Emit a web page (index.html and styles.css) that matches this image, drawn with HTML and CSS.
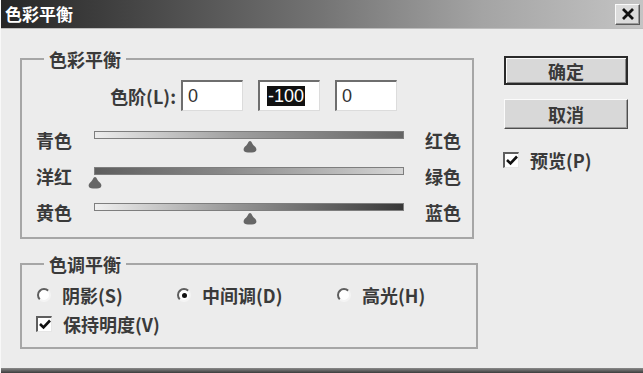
FILE: index.html
```html
<!DOCTYPE html>
<html lang="zh-CN">
<head>
<meta charset="utf-8">
<title>色彩平衡</title>
<link rel="stylesheet" href="styles.css">
</head>
<body>
<div class="window">
  <div class="titlebar">
    <span class="title">色彩平衡</span>
    <span class="close-btn">
      <svg width="14" height="12" viewBox="0 0 14 12"><path d="M2 1 L12 11 M12 1 L2 11" stroke="#111" stroke-width="2.8" fill="none"/></svg>
    </span>
  </div>
  <div class="main">
    <div class="left">
      <fieldset class="group group-color">
        <legend>色彩平衡</legend>
        <div class="levels">
          <span class="levels-label">色阶(L):</span>
          <span class="field">0</span>
          <span class="field"><span class="sel">-100</span></span>
          <span class="field">0</span>
        </div>
        <div class="slider-row">
          <span class="lbl">青色</span>
          <div class="slider">
            <div class="track track-cr"></div>
            <svg class="thumb" style="left:50%" width="14" height="12" viewBox="0 0 14 12"><path d="M7 0 C5.2 0 5 3 3 4.8 C1 6.3 0 8 1 10 C2.2 12 11.8 12 13 10 C14 8 13 6.3 11 4.8 C9 3 8.8 0 7 0Z"/></svg>
          </div>
          <span class="lbl-r">红色</span>
        </div>
        <div class="slider-row">
          <span class="lbl">洋红</span>
          <div class="slider">
            <div class="track track-mg"></div>
            <svg class="thumb" style="left:0%" width="14" height="12" viewBox="0 0 14 12"><path d="M7 0 C5.2 0 5 3 3 4.8 C1 6.3 0 8 1 10 C2.2 12 11.8 12 13 10 C14 8 13 6.3 11 4.8 C9 3 8.8 0 7 0Z"/></svg>
          </div>
          <span class="lbl-r">绿色</span>
        </div>
        <div class="slider-row">
          <span class="lbl">黄色</span>
          <div class="slider">
            <div class="track track-yb"></div>
            <svg class="thumb" style="left:50%" width="14" height="12" viewBox="0 0 14 12"><path d="M7 0 C5.2 0 5 3 3 4.8 C1 6.3 0 8 1 10 C2.2 12 11.8 12 13 10 C14 8 13 6.3 11 4.8 C9 3 8.8 0 7 0Z"/></svg>
          </div>
          <span class="lbl-r">蓝色</span>
        </div>
      </fieldset>
      <fieldset class="group group-tone">
        <legend>色调平衡</legend>
        <div class="radios">
          <span class="opt"><span class="radio"></span>阴影(S)</span>
          <span class="opt"><span class="radio radio-on"></span>中间调(D)</span>
          <span class="opt"><span class="radio"></span>高光(H)</span>
        </div>
        <div class="check-row">
          <span class="checkbox"><svg width="12" height="11" viewBox="0 0 12 11"><path d="M1 5 L4.5 8.5 L11 1.5" stroke="#111" stroke-width="2.6" fill="none"/></svg></span>
          <span>保持明度(V)</span>
        </div>
      </fieldset>
    </div>
    <div class="right">
      <button class="btn btn-default">确定</button>
      <button class="btn">取消</button>
      <div class="preview">
        <span class="checkbox"><svg width="12" height="11" viewBox="0 0 12 11"><path d="M1 5 L4.5 8.5 L11 1.5" stroke="#111" stroke-width="2.6" fill="none"/></svg></span>
        <span>预览(P)</span>
      </div>
    </div>
  </div>
  <div class="bottom-edge"></div>
</div>
</body>
</html>
```
FILE: styles.css
```css
* { box-sizing: border-box; }
html, body { margin: 0; padding: 0; }
body {
  width: 643px;
  height: 373px;
  overflow: hidden;
  background: #ececec;
  font-family: "Noto Sans CJK SC", "Noto Sans", sans-serif;
  font-size: 18px;
  font-weight: bold;
  line-height: 22px;
  color: #3a3a3a;
}
.window {
  height: 373px;
  display: flex;
  flex-direction: column;
  border-left: 1px solid #f8f8f8;
}
.titlebar {
  height: 29px;
  flex: none;
  display: flex;
  align-items: center;
  justify-content: space-between;
  padding: 0 3px 0 4px;
  background: linear-gradient(90deg, #262626 0%, #444444 20%, #747474 50%, #a4a4a4 75%, #c4c4c4 100%);
  border-bottom: 1px solid #bdbdbd;
}
.title {
  color: #fff;
  font-size: 17px;
  font-weight: bold;
  letter-spacing: 0;
}
.close-btn {
  width: 25px;
  height: 21px;
  display: flex;
  align-items: center;
  justify-content: center;
  background: #dcdcdc;
  border: 1px solid;
  border-color: #fafafa #5a5a5a #5a5a5a #fafafa;
  box-shadow: inset -1px -1px 0 #9a9a9a;
}
.main {
  flex: 1;
  display: flex;
  padding: 19px 0 0 19px;
}
.left {
  width: 458px;
  flex: none;
}
.group {
  margin: 0;
  border: 2px solid #a6a6a6;
  padding: 0 0 0 14px;
  min-width: 0;
}
.group legend {
  margin-left: 8px;
  padding: 0 5px;
  line-height: 22px;
}
.group-color {
  width: 454px;
  padding-top: 10px;
  padding-bottom: 7px;
}
.levels {
  display: flex;
  align-items: center;
  height: 31px;
  margin-bottom: 11px;
}
.levels-label {
  width: 145px;
  text-align: right;
  padding-right: 5px;
}
.field {
  width: 62px;
  height: 31px;
  margin-right: 15px;
  background: #fff;
  border-style: solid;
  border-width: 2px 1px 1px 2px;
  border-color: #6e6e6e #dcdcdc #dcdcdc #6e6e6e;
  padding: 2px 0 0 5px;
  font-family: "Liberation Sans", "Noto Sans", sans-serif;
  font-weight: normal;
  color: #333;
  font-size: 18px;
  line-height: 24px;
}
.sel {
  background: #111;
  color: #fff;
  padding: 0 1px 0 1px;
  margin-left: 2px;
}
.slider-row {
  display: grid;
  grid-template-columns: 58px 310px auto;
  align-items: center;
  height: 36px;
}
.slider {
  position: relative;
  height: 36px;
}
.track {
  margin-top: 9px;
  height: 8px;
  border: 1px solid #7e7e7e;
}
.track-cr { background: linear-gradient(90deg, #ececec 0%, #a0a0a0 45%, #646464 100%); }
.track-mg { background: linear-gradient(90deg, #5e5e5e 0%, #868686 40%, #d6d6d6 100%); }
.track-yb { background: linear-gradient(90deg, #f0f0f0 0%, #969696 45%, #383838 100%); }
.thumb {
  position: absolute;
  top: 19px;
  transform: translateX(-50%);
  fill: #666666;
  margin-left: 1px;
}
.lbl-r {
  margin-left: 21px;
}
.group-tone {
  width: 458px;
  margin-top: 14px;
  padding-top: 9px;
  padding-bottom: 12px;
}
.radios {
  display: grid;
  grid-template-columns: 140px 160px auto;
  height: 22px;
  align-items: center;
}
.opt {
  display: flex;
  align-items: center;
}
.radio {
  width: 14px;
  height: 14px;
  border-radius: 50%;
  background: #fff;
  border: 2px solid;
  border-color: #5e5e5e #f4f4f4 #f4f4f4 #5e5e5e;
  margin-right: 11px;
  margin-left: 1px;
  display: flex;
  align-items: center;
  justify-content: center;
}
.radio-on::after {
  content: "";
  width: 5px;
  height: 5px;
  border-radius: 50%;
  background: #111;
}
.check-row {
  display: flex;
  align-items: center;
  margin-top: 7px;
  height: 22px;
}
.checkbox {
  width: 16px;
  height: 16px;
  flex: none;
  background: #fff;
  border-style: solid;
  border-width: 2px 1px 1px 2px;
  border-color: #5e5e5e #e6e6e6 #e6e6e6 #5e5e5e;
  display: flex;
  align-items: center;
  justify-content: center;
  margin-right: 11px;
}
.right {
  margin-left: 26px;
  padding-top: 8px;
  display: flex;
  flex-direction: column;
  width: 124px;
}
.btn {
  width: 124px;
  height: 30px;
  padding: 0;
  font-family: inherit;
  font-size: 18px;
  font-weight: bold;
  line-height: 22px;
  color: #3a3a3a;
  background: #d8d8d8;
  border: 1px solid;
  border-color: #fbfbfb #4e4e4e #4e4e4e #fbfbfb;
  box-shadow: inset -1px -1px 0 #9c9c9c;
}
.btn-default {
  border: 2px solid #2a2a2a;
  box-shadow: inset 1px 1px 0 #fbfbfb, inset -1px -1px 0 #8a8a8a;
  height: 29px;
}
.btn + .btn {
  margin-top: 14px;
}
.preview {
  display: flex;
  align-items: center;
  margin-top: 20px;
  margin-left: -1px;
}
.bottom-edge {
  height: 5px;
  flex: none;
  background: linear-gradient(180deg, #8a8a8a, #3c3c3c);
}
```
